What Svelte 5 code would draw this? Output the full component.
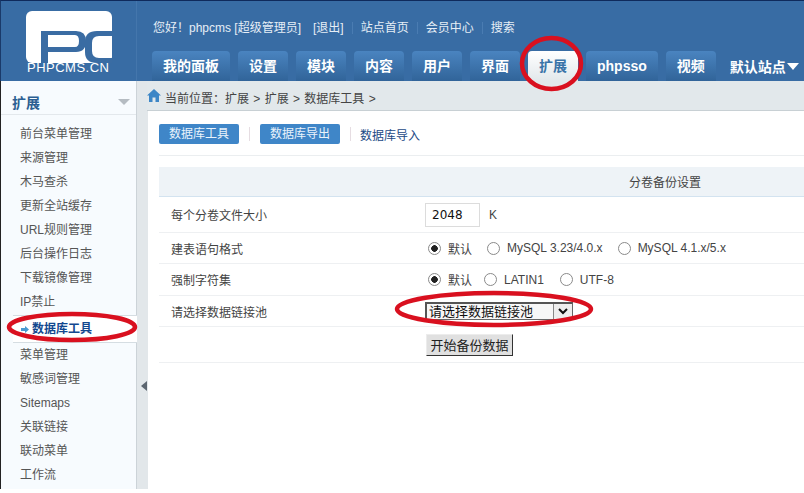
<script>
	const tabs = ['我的面板', '设置', '模块', '内容', '用户', '界面', '扩展', 'phpsso', '视频'];
	const menuTop = ['前台菜单管理', '来源管理', '木马查杀', '更新全站缓存', 'URL规则管理', '后台操作日志', '下载镜像管理', 'IP禁止'];
	const menuBottom = ['菜单管理', '敏感词管理', 'Sitemaps', '关联链接', '联动菜单', '工作流'];
</script>

<div class="page">
	<header class="header">
		<div class="logo">
			<svg width="86" height="52" viewBox="0 0 86 52">
				<rect width="86" height="52" rx="6" fill="#fff" />
				<path d="M15 52V20H50Q60 20 60 30Q60 41 50 41H22V36H49Q53 36 53 30Q53 24 49 24H22V52Z" fill="#3a6ca3" />
				<path d="M86 20H71Q59 20 59 31V41Q59 52 71 52H86V47H73Q66 47 66 40V32Q66 25 73 25H86Z" fill="#3a6ca3" />
			</svg>
			<span>PHPCMS.CN</span>
		</div>
		<div class="header-right">
			<div class="top-links">
				<span>您好！phpcms [超级管理员]</span>
				<span class="exit">[退出]</span>
				<span class="sep"></span>
				<span>站点首页</span>
				<span class="sep"></span>
				<span>会员中心</span>
				<span class="sep"></span>
				<span>搜索</span>
			</div>
			<nav class="tabs">
				{#each tabs as tab}
					<span class="tab" class:on={tab === '扩展'}>{tab}</span>
				{/each}
				<span class="site">默认站点<i class="down"></i></span>
			</nav>
		</div>
	</header>

	<div class="body">
		<aside class="sidebar">
			<div class="side-title"><h3>扩展</h3><i class="side-arrow"></i></div>
			<ul>
				{#each menuTop as item}
					<li>{item}</li>
				{/each}
				<li class="active">
					<svg width="8" height="7" viewBox="0 0 8 7"><path d="M0 2H4V0L8 3.500L4 7V5H0Z" fill="#4a9ad0" /></svg>
					数据库工具
				</li>
				{#each menuBottom as item}
					<li>{item}</li>
				{/each}
			</ul>
		</aside>
		<div class="collapse"><i></i></div>

		<main class="main">
			<div class="crumb">
				<svg width="14" height="13" viewBox="0 0 14 13"><path d="M7 0L14 6.5H12V13H8.5V8.500H5.500V13H2V6.500H0Z" fill="#3d86c6" /></svg>
				<span>当前位置：扩展 &gt; 扩展 &gt; 数据库工具 &gt;</span>
			</div>
			<div class="content">
				<div class="subnav">
					<span class="btn">数据库工具</span>
					<span class="bar"></span>
					<span class="btn">数据库导出</span>
					<span class="bar"></span>
					<span class="link">数据库导入</span>
				</div>
				<table>
					<colgroup>
						<col class="col-label" />
						<col />
					</colgroup>
					<thead>
						<tr><th colspan="2">分卷备份设置</th></tr>
					</thead>
					<tbody>
						<tr class="tall">
							<td class="lbl">每个分卷文件大小</td>
							<td><input class="size" value="2048" /><span class="k">K</span></td>
						</tr>
						<tr class="r31">
							<td class="lbl">建表语句格式</td>
							<td>
								<div class="opts">
									<label><input type="radio" name="fmt" checked />默认</label>
									<label><input type="radio" name="fmt" />MySQL 3.23/4.0.x</label>
									<label><input type="radio" name="fmt" />MySQL 4.1.x/5.x</label>
								</div>
							</td>
						</tr>
						<tr class="r32">
							<td class="lbl">强制字符集</td>
							<td>
								<div class="opts charset">
									<label><input type="radio" name="cs" checked />默认</label>
									<label><input type="radio" name="cs" />LATIN1</label>
									<label><input type="radio" name="cs" />UTF-8</label>
								</div>
							</td>
						</tr>
						<tr class="r31">
							<td class="lbl">请选择数据链接池</td>
							<td>
								<div class="select">
									<span class="select-text">请选择数据链接池</span>
									<span class="select-btn">
										<svg width="10" height="7" viewBox="0 0 10 7"><path d="M1 1L5 5L9 1" fill="none" stroke="#111" stroke-width="2" /></svg>
									</span>
								</div>
							</td>
						</tr>
						<tr class="tall">
							<td></td>
							<td><button class="start">开始备份数据</button></td>
						</tr>
					</tbody>
				</table>
			</div>
		</main>
	</div>

	<!-- red marks drawn over the screenshot -->
	<svg class="marks" width="804" height="493" viewBox="0 0 804 493">
		<ellipse cx="551.500" cy="63.500" rx="29.500" ry="25.500" />
		<ellipse cx="72" cy="327" rx="63" ry="13" />
		<ellipse cx="494" cy="309" rx="97" ry="16" />
	</svg>
</div>

<style>
	:global(body) {
		margin: 0;
		background: #fff;
		font-family: "Liberation Sans", "Noto Sans CJK SC", sans-serif;
		font-size: 12px;
		color: #444;
	}

	.page {
		position: relative;
		width: 804px;
		height: 493px;
		overflow: hidden;
		box-sizing: border-box;
	}

	.header {
		display: flex;
		height: 81px;
		box-sizing: border-box;
		background: #386ca4;
		border-top: 1px solid #0f2a5c;
		border-left: 1px solid #1a3a6a;
	}

	.logo {
		width: 136px;
		flex: none;
		padding: 10px 0 0 25px;
		box-sizing: border-box;
		border-right: 1px solid #4476ac;
		color: #fff;
	}

	.logo svg {
		display: block;
	}

	.logo span {
		display: block;
		margin: -2px 0 0 1px;
		font-size: 13px;
		line-height: 14px;
		letter-spacing: 0.5px;
		white-space: nowrap;
	}

	.header-right {
		flex: 1;
		min-width: 0;
		padding-left: 15px;
	}

	.top-links {
		display: flex;
		align-items: center;
		height: 50px;
		padding: 4px 0 0 1px;
		box-sizing: border-box;
		color: #e6eef6;
		line-height: 16px;
	}

	.exit {
		margin-left: 12px;
	}

	.sep {
		width: 1px;
		height: 12px;
		margin: 0 8px;
		background: #4a7cb2;
	}

	.tabs {
		display: flex;
		gap: 8px;
		white-space: nowrap;
	}

	.tab {
		height: 30px;
		padding: 0 11px;
		min-width: 28px;
		text-align: center;
		border-radius: 4px 4px 0 0;
		background: linear-gradient(#4a84c0, #316499);
		color: #fff;
		font-size: 14px;
		font-weight: bold;
		line-height: 30px;
	}

	.tab.on {
		background: linear-gradient(#fff, #e2e8eb);
		color: #3a74a8;
	}

	.site {
		display: flex;
		align-items: center;
		padding-left: 6px;
		color: #fff;
		font-size: 14px;
		font-weight: bold;
	}

	.down {
		width: 0;
		height: 0;
		margin-left: 1px;
		border: 6px solid transparent;
		border-top: 7px solid #fff;
		border-bottom: 0;
	}

	.body {
		display: flex;
		height: 408px;
		border-left: 1px solid #222;
		margin-bottom: 4px;
	}

	.sidebar {
		width: 136px;
		flex: none;
		height: 408px;
		box-sizing: border-box;
		background: #f7fbfe;
		border-right: 1px solid #ccd3d8;
	}

	.side-title {
		display: flex;
		align-items: center;
		justify-content: space-between;
		height: 34px;
		padding: 9px 6px 0 11px;
		box-sizing: border-box;
		border-bottom: 1px solid #e3e8ec;
	}

	.side-title h3 {
		margin: 0;
		font-size: 14px;
		color: #2b5f92;
	}

	.side-arrow {
		width: 0;
		height: 0;
		border: 6px solid transparent;
		border-top: 6px solid #b5bcc2;
		border-bottom: 0;
	}

	ul {
		margin: 0;
		padding: 7px 0 0;
		list-style: none;
	}

	li {
		height: 24px;
		padding-left: 19px;
		line-height: 24px;
		color: #555;
		white-space: nowrap;
	}

	li.active {
		display: flex;
		align-items: center;
		gap: 3px;
		height: 28px;
		margin: 1px -1px 0 12px;
		padding-left: 8px;
		box-sizing: border-box;
		background: #fff;
		border-top: 1px solid #d5dde2;
		border-bottom: 1px solid #d5dde2;
		color: #12488f;
		font-weight: bold;
	}

	.collapse {
		width: 11px;
		flex: none;
		box-sizing: border-box;
		padding: 300px 0 0 4px;
		background: #e2e7ea;
		height: 408px;
	}

	.collapse i {
		display: block;
		width: 0;
		height: 0;
		border: 5px solid transparent;
		border-right: 6px solid #5c6670;
		border-left: 0;
	}

	.main {
		flex: 1;
		min-width: 0;
	}

	.crumb {
		display: flex;
		align-items: center;
		gap: 4px;
		height: 30px;
		padding: 4px 0 0;
		margin-left: -1px;
		box-sizing: border-box;
		background: #e2e8eb;
		border-bottom: 1px solid #c8d0d4;
		word-spacing: 1px;
	}

	.crumb svg {
		margin-top: -5px;
	}

	.content {
		padding: 13px 0 0 11px;
	}

	.subnav {
		display: flex;
		align-items: center;
		height: 20px;
		padding-bottom: 11px;
		border-bottom: 1px solid #ebeef0;
	}

	.btn {
		padding: 0 10px;
		height: 20px;
		line-height: 21px;
		border-radius: 2px;
		background: #3f86c8;
		color: #eaf3fb;
	}

	.bar {
		width: 1px;
		height: 14px;
		margin: 0 10px;
		background: #e6dde2;
	}

	.bar:nth-child(4) {
		margin-right: 9px;
	}

	.link {
		color: #1c4a86;
	}

	table {
		width: 1012px;
		margin-top: 11px;
		border-collapse: collapse;
		table-layout: fixed;
	}

	.col-label {
		width: 266px;
	}

	th {
		height: 29px;
		padding: 0;
		background: #eef3f7;
		border-bottom: 1px solid #d3e3f0;
		font-weight: normal;
		color: #444;
	}

	td {
		padding: 0;
		border-bottom: 1px solid #eef0f2;
	}

	.lbl {
		padding-left: 12px;
	}

	.tall {
		height: 36px;
	}

	.r31 {
		height: 31px;
	}

	.r32 {
		height: 32px;
	}

	.size {
		display: inline-block;
		width: 55px;
		height: 24px;
		padding: 0 0 0 6px;
		box-sizing: border-box;
		border: 1px solid #dcdcdc;
		font: 12px "DejaVu Sans", sans-serif;
		color: #111;
		vertical-align: middle;
	}

	.k {
		margin-left: 9px;
		vertical-align: middle;
	}

	.opts {
		display: flex;
		align-items: center;
		white-space: nowrap;
	}

	label {
		display: flex;
		align-items: center;
		margin-right: 12px;
	}

	.charset label:first-child {
		margin-right: 9px;
	}

	.charset label:nth-child(2) {
		margin-right: 13px;
	}

	input[type="radio"] {
		appearance: none;
		width: 13px;
		height: 13px;
		margin: 0 7px 0 3px;
		border: 1px solid #8a8a8a;
		border-radius: 50%;
		background: #fff;
	}

	input[type="radio"]:checked {
		background: radial-gradient(circle, #222 0 3px, #fff 3.600px);
	}

	.select {
		display: flex;
		width: 148px;
		height: 18px;
		box-sizing: border-box;
		border: 1px solid #666;
		border-top: 2px solid #555;
		border-left: 2px solid #555;
		background: #f7f7f7;
	}

	.select-text {
		flex: 1;
		padding-left: 2px;
		font-size: 13px;
		line-height: 15px;
		color: #111;
	}

	.select-btn {
		display: flex;
		align-items: center;
		justify-content: center;
		width: 18px;
		background: #eee;
		border-left: 1px solid #888;
	}

	.start {
		width: 87px;
		height: 22px;
		margin: 0 0 0 1px;
		padding: 0;
		background: #e0e0e0;
		border: 1px solid;
		border-color: #ececec #333 #333 #ececec;
		font: inherit;
		font-size: 13px;
		color: #222;
		vertical-align: middle;
	}

	.marks {
		position: absolute;
		top: 0;
		left: 0;
		pointer-events: none;
	}

	.marks ellipse {
		fill: none;
		stroke: #d9101f;
		stroke-width: 4.500;
	}
</style>
